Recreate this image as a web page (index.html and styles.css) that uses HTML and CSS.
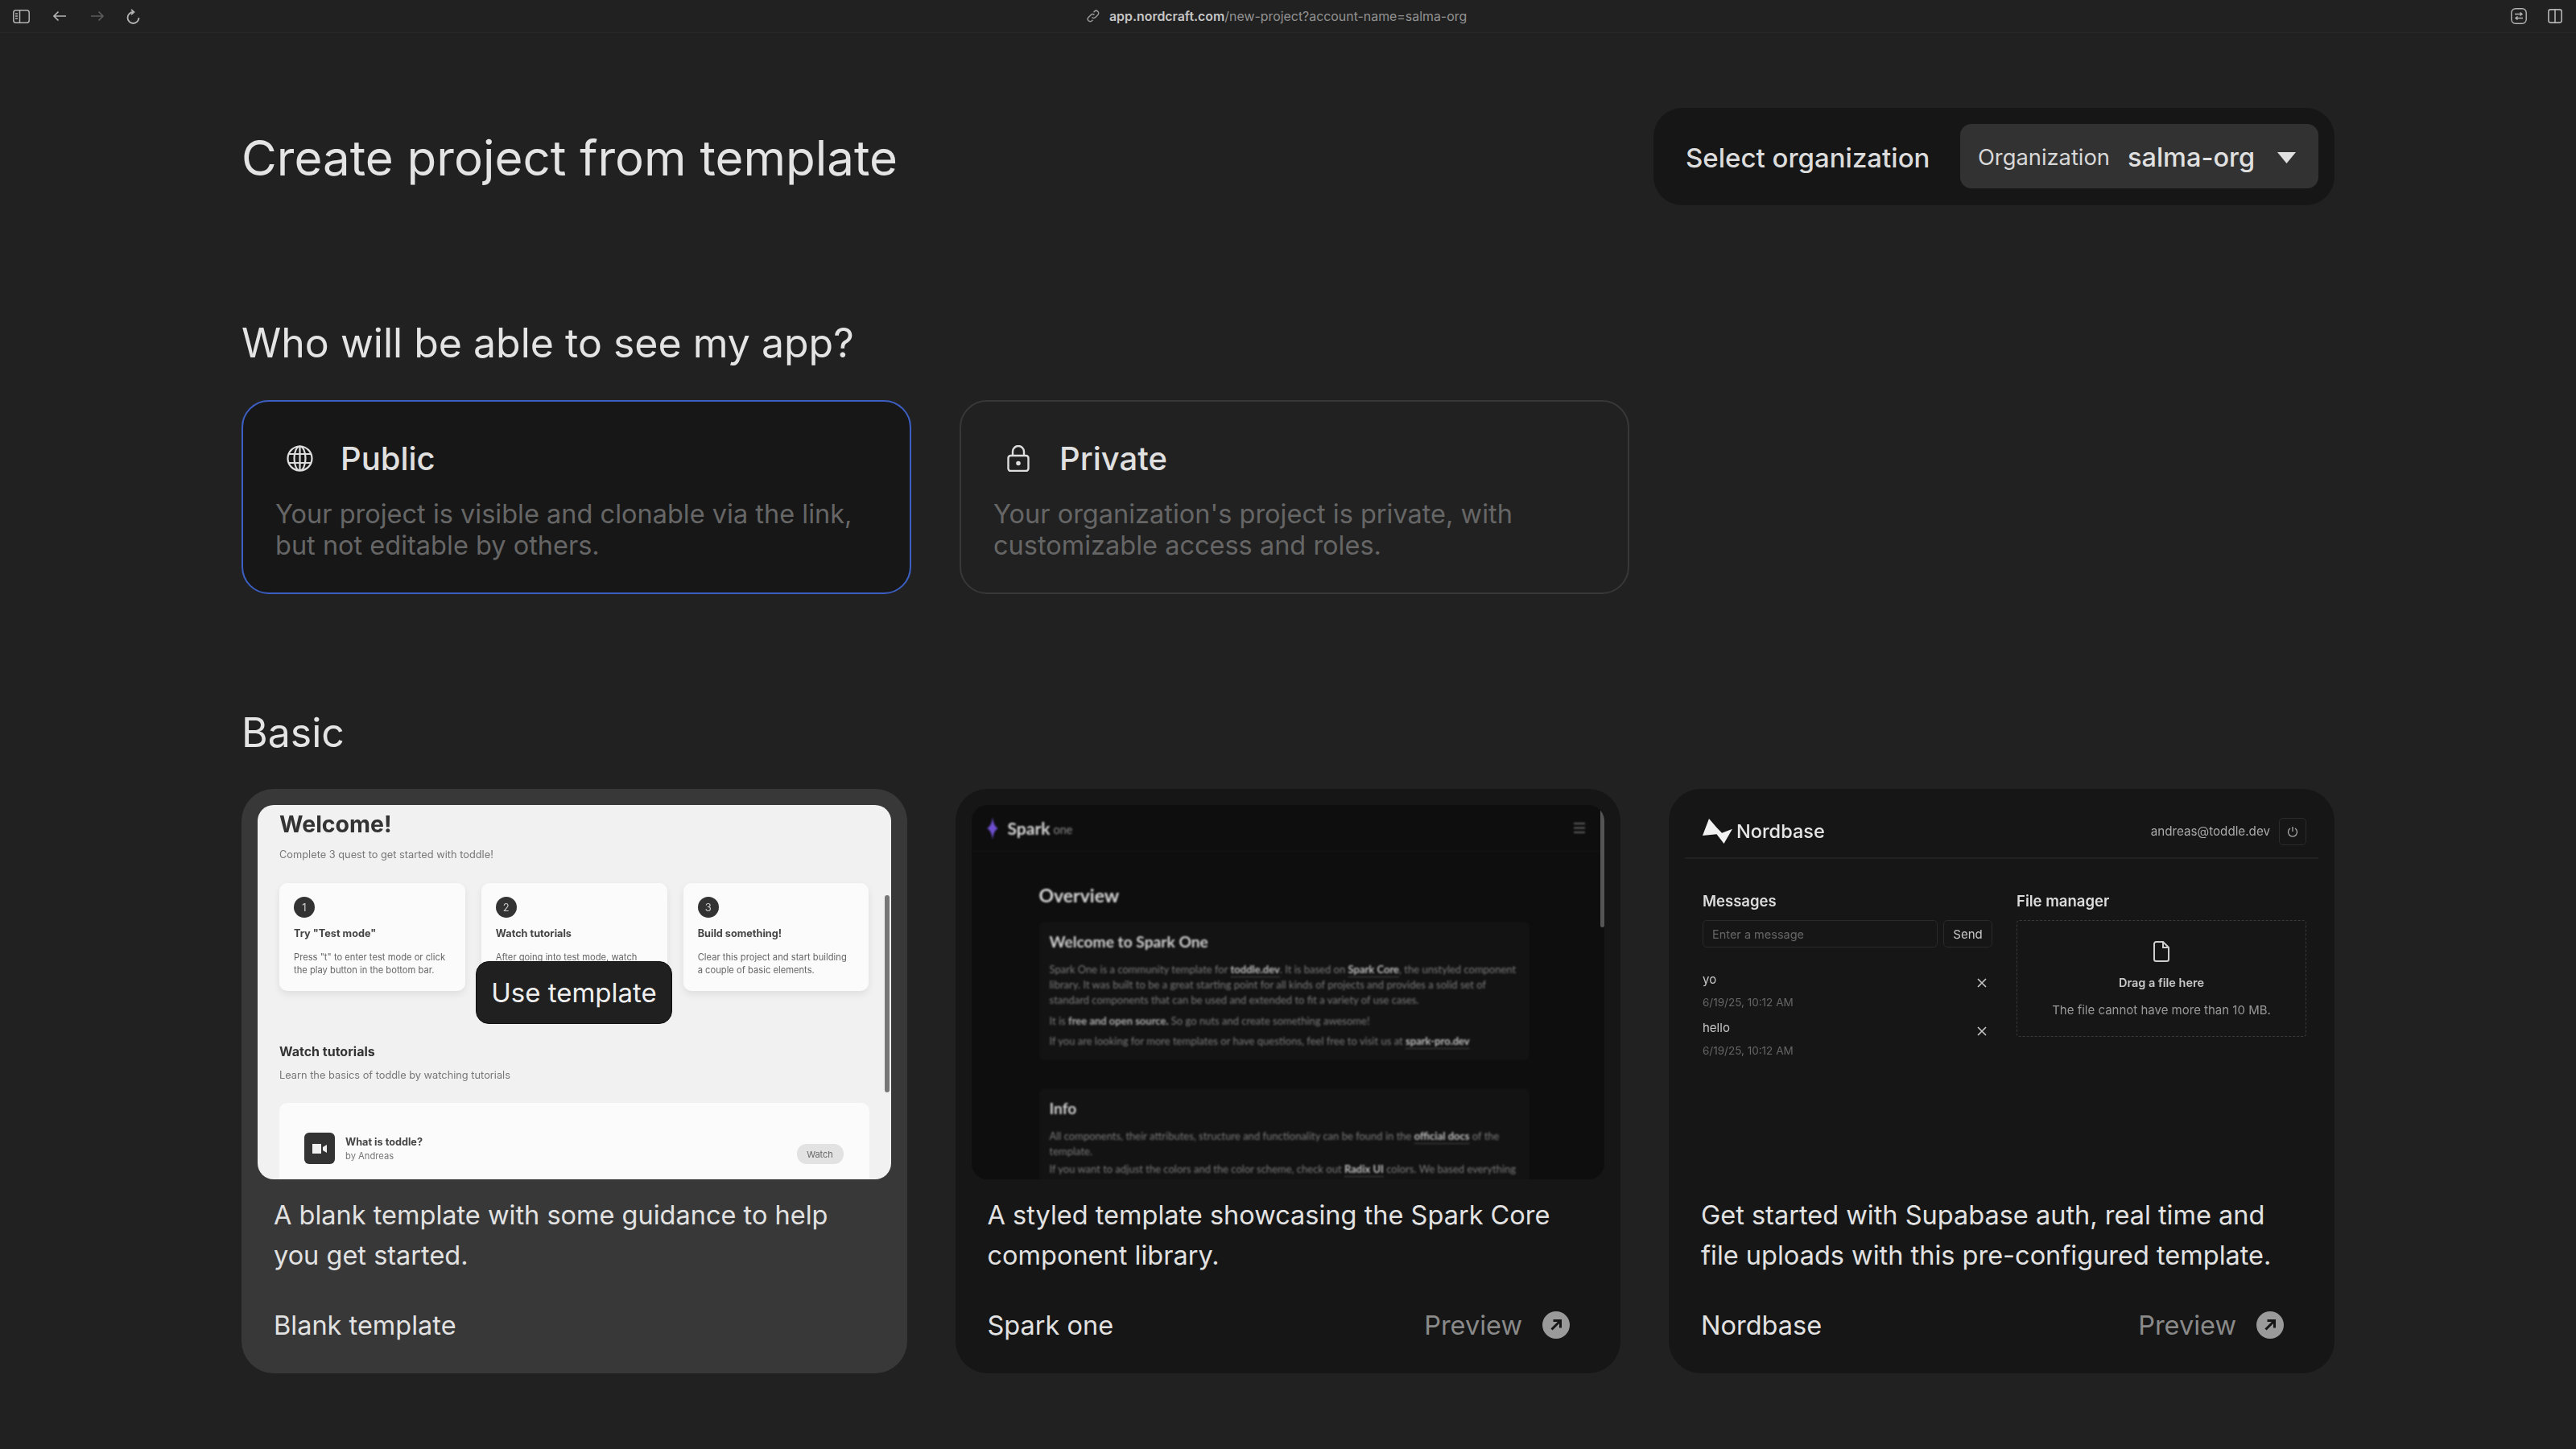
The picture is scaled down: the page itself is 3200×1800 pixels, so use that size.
FILE: index.html
```html
<!DOCTYPE html>
<html lang="en">
<head>
<meta charset="utf-8">
<title>Create project from template</title>
<link rel="stylesheet" href="styles.css">
</head>
<body>
<div class="page">
  <header class="toolbar">
    <div class="tb-left">
      <svg class="ic-side" viewBox="0 0 21 17" fill="none" stroke="currentColor" stroke-width="1.5"><rect x=".8" y=".8" width="19.4" height="15.4" rx="3"/><path d="M8.5 1v15"/><path d="M3 5h3M3 8h3M3 11h3"/></svg>
      <svg class="ic-arrow" viewBox="0 0 18 14" fill="none" stroke="currentColor" stroke-width="1.7"><path d="M17 7H2M7.500 1.500 2 7l5.500 5.500"/></svg>
      <svg class="ic-arrow dim" viewBox="0 0 18 14" fill="none" stroke="currentColor" stroke-width="1.7"><path d="M1 7h15M10.500 1.500 16 7l-5.500 5.500"/></svg>
      <svg class="ic-reload" viewBox="0 0 17 19" fill="none" stroke="currentColor" stroke-width="1.8"><path d="M8.500 4A7 7 0 1 0 15.500 11"/><path d="M6 .8 9.500 4 6 7.200"/></svg>
    </div>
    <div class="url">
      <svg class="ic-link" viewBox="0 0 16 16" fill="none" stroke="currentColor" stroke-width="1.5"><path d="M6.500 9.500a3 3 0 0 0 4.300 0l3-3a3 3 0 0 0-4.300-4.300l-1 1"/><path d="M9.500 6.500a3 3 0 0 0-4.300 0l-3 3a3 3 0 0 0 4.300 4.300l1-1"/></svg>
      <span class="url-text"><b class="url-host">app.nordcraft.com</b>/new-project?account-name=salma-org</span>
    </div>
    <div class="tb-right">
      <svg class="ic-ext" viewBox="0 0 20 20" fill="none" stroke="currentColor" stroke-width="1.4"><rect x=".8" y=".8" width="18.400" height="18.400" rx="5"/><path d="M5 7.500h9M11.500 5.500l2.500 2-2.500 2M15 12.500H6M8.500 10.500l-2.500 2 2.500 2"/></svg>
      <svg class="ic-split" viewBox="0 0 18 18" fill="none" stroke="currentColor" stroke-width="1.6"><rect x=".9" y=".9" width="16.200" height="16.200" rx="2.500"/><path d="M9 1v16"/></svg>
    </div>
  </header>

  <main class="main">
    <section class="top">
      <h1 class="title">Create project from template</h1>
      <div class="org">
        <span class="org-label">Select organization</span>
        <div class="select">
          <span class="select-key">Organization</span>
          <span class="select-val">salma-org</span>
          <svg class="caret" viewBox="0 0 23 14"><path d="M0 0h23L11.500 14z" fill="currentColor"/></svg>
        </div>
      </div>
    </section>

    <h2 class="heading who">Who will be able to see my app?</h2>
    <section class="options">
      <article class="option active">
        <div class="option-head">
          <svg class="ic-globe" viewBox="0 0 33 33" fill="none" stroke="currentColor" stroke-width="2.200"><circle cx="16.500" cy="16.500" r="15"/><ellipse cx="16.500" cy="16.500" rx="7" ry="15"/><path d="M3 11h27M3 22h27M16.500 1.500v30"/></svg>
          <span class="option-name">Public</span>
        </div>
        <p class="option-desc">Your project is visible and clonable via the link, but not editable by others.</p>
      </article>
      <article class="option">
        <div class="option-head">
          <svg class="ic-lock" viewBox="0 0 28 33" fill="none" stroke="currentColor" stroke-width="2.400"><rect x="1.500" y="13" width="25" height="19" rx="3"/><path d="M7 13V8a7 7 0 0 1 14 0v5"/><circle cx="14" cy="22.500" r="1.600" fill="currentColor"/></svg>
          <span class="option-name">Private</span>
        </div>
        <p class="option-desc">Your organization's project is private, with customizable access and roles.</p>
      </article>
    </section>

    <h2 class="heading basic">Basic</h2>
    <section class="cards">
      <article class="card hover">
        <div class="preview blank">
          <div class="blur blank-inner">
            <div class="bl-h1">Welcome!</div>
            <div class="bl-sub">Complete 3 quest to get started with toddle!</div>
            <div class="quests">
              <div class="quest"><span class="num">1</span><div class="q-title">Try "Test mode"</div><div class="q-desc">Press "t" to enter test mode or click the play button in the bottom bar.</div></div>
              <div class="quest"><span class="num">2</span><div class="q-title">Watch tutorials</div><div class="q-desc">After going into test mode, watch</div></div>
              <div class="quest"><span class="num">3</span><div class="q-title">Build something!</div><div class="q-desc">Clear this project and start building a couple of basic elements.</div></div>
            </div>
            <div class="bl-h2">Watch tutorials</div>
            <div class="bl-sub learn">Learn the basics of toddle by watching tutorials</div>
            <div class="tutorial">
              <span class="tut-icon"><svg class="ic-video" viewBox="0 0 18 14"><path d="M0 1h11v12H0zM13 5l5-3v10l-5-3z" fill="currentColor"/></svg></span>
              <div class="tut-text"><div class="tut-title">What is toddle?</div><div class="tut-by">by Andreas</div></div>
              <span class="watch">Watch</span>
            </div>
          </div>
          <span class="scroll-light"></span>
          <button class="use">Use template</button>
        </div>
        <div class="card-body">
          <p class="card-desc">A blank template with some guidance to help you get started.</p>
          <div class="card-foot"><span class="card-name">Blank template</span></div>
        </div>
      </article>

      <article class="card">
        <div class="preview spark">
          <div class="blur-strong">
            <div class="sp-bar">
              <div class="sp-brand">
                <svg class="ic-star" viewBox="0 0 14 28"><path d="M7 0c1 8 3 12 7 14-4 2-6 6-7 14-1-8-3-12-7-14 4-2 6-6 7-14z" fill="#6d4fd0"/></svg>
                <span class="sp-name">Spark</span><span class="sp-one">one</span>
              </div>
              <svg class="ic-menu" viewBox="0 0 14 13" fill="none" stroke="currentColor" stroke-width="1.500"><path d="M0 1h14M0 6.500h14M0 12h14"/></svg>
            </div>
            <div class="sp-content">
              <div class="sp-h1">Overview</div>
              <div class="sp-card first">
                <div class="sp-h2">Welcome to Spark One</div>
                <p class="sp-p">Spark One is a community template for <b class="sp-link">toddle.dev</b>. It is based on <b class="sp-link">Spark Core</b>, the unstyled component library. It was built to be a great starting point for all kinds of projects and provides a solid set of standard components that can be used and extended to fit a variety of use cases.</p>
                <p class="sp-p gap-a">It is <b class="sp-b">free and open source.</b> So go nuts and create something awesome!</p>
                <p class="sp-p gap-b">If you are looking for more templates or have questions, feel free to visit us at <b class="sp-link">spark-pro.dev</b></p>
              </div>
              <div class="sp-card second">
                <div class="sp-h2">Info</div>
                <p class="sp-p">All components, their attributes, structure and functionality can be found in the <b class="sp-link">official docs</b> of the template.</p>
                <p class="sp-p gap-c">If you want to adjust the colors and the color scheme, check out <b class="sp-link">Radix UI</b> colors. We based everything on</p>
              </div>
            </div>
          </div>
          <span class="scroll-dark"></span>
        </div>
        <div class="card-body">
          <p class="card-desc">A styled template showcasing the Spark Core component library.</p>
          <div class="card-foot">
            <span class="card-name">Spark one</span>
            <span class="preview-link">Preview
              <svg class="ic-go" viewBox="0 0 34 34"><circle cx="17" cy="17" r="17" fill="#9a9a9a"/><path d="M11.500 22.500 22 12M13.500 11.500H22.500V20.500" fill="none" stroke="#161616" stroke-width="3"/></svg>
            </span>
          </div>
        </div>
      </article>

      <article class="card">
        <div class="preview nord">
          <div class="blur">
            <div class="nb-bar">
              <div class="nb-brand">
                <svg class="ic-nord" viewBox="0 0 37 32"><path d="M0 21 8 0l9.500 11L24 17.700l13-5L26.500 31 17.500 19.300z" fill="#f2f2f2"/></svg>
                <span class="nb-name">Nordbase</span>
              </div>
              <div class="nb-user">
                <span class="nb-mail">andreas@toddle.dev</span>
                <span class="nb-power"><svg class="ic-power" viewBox="0 0 14 14" fill="none" stroke="currentColor" stroke-width="1.300"><path d="M4 3a5.500 5.500 0 1 0 6 0M7 1v6"/></svg></span>
              </div>
            </div>
            <div class="nb-grid">
              <div>
                <div class="nb-h">Messages</div>
                <div class="nb-form"><span class="nb-input">Enter a message</span><span class="nb-send">Send</span></div>
                <div class="nb-msg first"><div><div class="nb-text">yo</div><div class="nb-date">6/19/25, 10:12 AM</div></div><svg class="ic-x" viewBox="0 0 16 16" fill="none" stroke="currentColor" stroke-width="1.600"><path d="m3 3 10 10M13 3 3 13"/></svg></div>
                <div class="nb-msg"><div><div class="nb-text">hello</div><div class="nb-date">6/19/25, 10:12 AM</div></div><svg class="ic-x" viewBox="0 0 16 16" fill="none" stroke="currentColor" stroke-width="1.600"><path d="m3 3 10 10M13 3 3 13"/></svg></div>
              </div>
              <div>
                <div class="nb-h">File manager</div>
                <div class="drop">
                  <svg class="ic-file" viewBox="0 0 20 26" fill="none" stroke="currentColor" stroke-width="2"><path d="M3.500 1H12l7 7v14.500A2.500 2.500 0 0 1 16.500 25h-13A2.500 2.500 0 0 1 1 22.500v-19A2.500 2.500 0 0 1 3.500 1zM12 1v7h7"/></svg>
                  <div class="drop-title">Drag a file here</div>
                  <div class="drop-note">The file cannot have more than 10 MB.</div>
                </div>
              </div>
            </div>
          </div>
        </div>
        <div class="card-body">
          <p class="card-desc">Get started with Supabase auth, real time and file uploads with this pre-configured template.</p>
          <div class="card-foot">
            <span class="card-name">Nordbase</span>
            <span class="preview-link">Preview
              <svg class="ic-go" viewBox="0 0 34 34"><circle cx="17" cy="17" r="17" fill="#9a9a9a"/><path d="M11.500 22.500 22 12M13.500 11.500H22.500V20.500" fill="none" stroke="#161616" stroke-width="3"/></svg>
            </span>
          </div>
        </div>
      </article>
    </section>
  </main>
</div>
</body>
</html>
```

FILE: styles.css
```css
* { box-sizing: border-box; }
html, body { margin: 0; padding: 0; }
body { background: #212121; color: #e2e2e2; font-family: Inter, "Liberation Sans", sans-serif; }
.page { width: 3200px; height: 1800px; overflow: hidden; background: #212121; }
p { margin: 0; }

/* browser bar */
.toolbar { height: 41px; border-bottom: 1px solid #282828; display: flex; align-items: center; justify-content: space-between; position: relative; padding: 0 17px 0 16px; color: #b4b4b4; }
.tb-left { display: flex; align-items: center; }
.ic-side { width: 21px; height: 17px; margin-right: 28px; }
.ic-arrow { width: 18px; height: 14px; margin-right: 29px; }
.ic-arrow.dim { color: #5c5c5c; margin-right: 27px; }
.ic-reload { width: 17px; height: 19px; }
.url { position: absolute; left: 1350px; top: 0; height: 40px; display: flex; align-items: center; color: #999; }
.ic-link { width: 16px; height: 16px; margin-right: 12px; }
.url-text { font-size: 15.900px; white-space: nowrap; color: #929292; }
.url-host { font-weight: 600; color: #c6c6c6; }
.tb-right { display: flex; align-items: center; }
.ic-ext { width: 20px; height: 20px; margin-right: 26px; }
.ic-split { width: 18px; height: 18px; }

/* layout */
.main { padding: 0 300px; }
.top { margin-top: 92px; height: 122px; display: flex; align-items: center; justify-content: space-between; }
.title { margin: 0; padding-top: 3px; font-size: 60px; line-height: 80px; font-weight: 400; color: #e4e4e4; }
.org { width: 846px; height: 121px; background: #161616; border-radius: 36px; display: flex; align-items: center; justify-content: space-between; padding: 0 20px 0 40px; }
.org-label { padding-top: 3px; font-size: 33px; font-weight: 500; color: #dcdcdc; }
.select { width: 445px; height: 80px; background: #323232; border-radius: 14px; display: flex; align-items: center; padding: 3px 28px 0 22px; }
.select-key { font-size: 27.300px; color: #d8d8d8; }
.select-val { font-size: 32.500px; font-weight: 500; color: #e0e0e0; margin-left: 22px; }
.caret { width: 23px; height: 14px; margin-left: auto; color: #e0e0e0; }

.heading { margin: 0; font-size: 50px; line-height: 60px; font-weight: 400; color: #e4e4e4; }
.who { margin-top: 141px; padding-bottom: 1px; }
.options { margin-top: 40px; display: flex; gap: 60px; }
.option { width: 832px; height: 241px; border: 2px solid #383838; border-radius: 34px; padding: 51px 40px 0 40px; }
.option.active { background: #171717; border-color: #3c5fc4; }
.option-head { display: flex; align-items: center; height: 38px; padding-left: 14px; color: #dedede; }
.ic-globe { width: 33px; height: 33px; margin-right: 34px; }
.ic-lock { width: 28px; height: 33px; margin: 0 37px 0 3px; }
.option-name { font-size: 40px; font-weight: 500; color: #e0e0e0; }
.option-desc { margin-top: 31px; font-size: 32.500px; line-height: 39px; color: #666; }
.basic { margin-top: 142px; }

/* cards */
.cards { margin-top: 40px; display: grid; grid-template-columns: repeat(3, 1fr); gap: 60px; }
.card { height: 726px; background: #161616; border-radius: 40px; padding: 20px; }
.card.hover { background: #383838; }
.preview { position: relative; height: 465px; border-radius: 20px; overflow: hidden; }
.blur { filter: blur(.6px); }
.blur-strong { filter: blur(.8px); }
.card-body { padding: 0 20px; }
.card-desc { margin-top: 20px; font-size: 32.500px; line-height: 50px; color: #e2e2e2; }
.card-foot { margin-top: 36px; height: 50px; display: flex; align-items: center; justify-content: space-between; }
.card-name { font-size: 32.500px; color: #e2e2e2; }
.preview-link { display: flex; align-items: center; font-size: 32.500px; color: #8a8a8a; margin-right: 23px; }
.ic-go { width: 34px; height: 34px; margin-left: 25px; }

/* blank preview */
.blank { background: #f1f1f1; color: #333; }
.blank-inner { padding: 4px 27px 0; }
.bl-h1 { font-size: 28.500px; line-height: 40px; font-weight: 700; color: #333; }
.bl-sub { margin-top: 8px; font-size: 12.800px; line-height: 20px; color: #777; white-space: nowrap; }
.quests { margin-top: 25px; display: grid; grid-template-columns: repeat(3, 1fr); gap: 20px; }
.quest { height: 134px; background: #fbfbfb; border-radius: 10px; box-shadow: 0 4px 10px rgba(0,0,0,.08); padding: 17px 24px 0 18px; overflow: hidden; }
.num { display: flex; align-items: center; justify-content: center; width: 26px; height: 26px; border-radius: 50%; background: #333; color: #ccc; font-size: 13px; }
.q-title { margin-top: 10px; font-size: 12.700px; line-height: 20px; font-weight: 700; color: #444; }
.q-desc { margin-top: 11px; font-size: 11.200px; line-height: 16px; color: #666; }
.bl-h2 { margin-top: 63px; font-size: 16px; line-height: 24px; font-weight: 700; color: #333; }
.learn { margin-top: 8px; }
.tutorial { margin-top: 24px; height: 150px; background: #fbfbfb; border-radius: 10px; padding: 37px 32px 0 31px; display: flex; align-items: flex-start; }
.tut-icon { width: 38px; height: 39px; border-radius: 6px; background: #333; display: flex; align-items: center; justify-content: center; color: #f0f0f0; }
.ic-video { width: 18px; height: 14px; }
.tut-text { margin-left: 13px; margin-top: 3px; }
.tut-title { font-size: 12.700px; line-height: 18px; font-weight: 700; color: #444; }
.tut-by { font-size: 11.200px; line-height: 16px; color: #777; }
.watch { margin-left: auto; margin-top: 14px; width: 58px; height: 25px; border-radius: 12px; background: #e2e2e2; color: #666; font-size: 11px; display: flex; align-items: center; justify-content: center; }
.scroll-light { position: absolute; left: 779px; top: 112px; width: 6px; height: 245px; border-radius: 3px; background: #777; }
.use { position: absolute; left: 271px; top: 194px; width: 244px; height: 78px; border: 1px solid #111; border-radius: 16px; background: #202020; color: #efefef; font: 400 33px Inter, sans-serif; padding: 0; }

/* spark preview */
.spark { background: #0e0e0e; font-family: Lato, "Noto Sans", sans-serif; }
.sp-bar { height: 58px; border-bottom: 1px solid #171717; display: flex; align-items: center; justify-content: space-between; padding: 0 24px 0 19px; }
.sp-brand { display: flex; align-items: center; }
.ic-star { width: 14px; height: 28px; margin-right: 12px; }
.sp-name { font-size: 21px; font-weight: 700; color: #d8d8d8; }
.sp-one { font-size: 14.500px; color: #888; margin-left: 4px; margin-top: 4px; }
.ic-menu { width: 14px; height: 13px; color: #777; }
.sp-content { padding: 0 93px 0 84px; }
.sp-h1 { margin-top: 39px; font-size: 23px; line-height: 30px; font-weight: 700; color: #d6d6d6; }
.sp-card { background: #131313; border-radius: 6px; padding: 13px 13px 14px; }
.sp-card.first { margin-top: 18px; }
.sp-card.second { margin-top: 35px; }
.sp-h2 { font-size: 19.200px; line-height: 24px; font-weight: 700; color: #cfcfcf; margin-bottom: 13px; }
.sp-p { font-size: 13px; line-height: 19px; color: #7a7a7a; }
.sp-link { font-weight: 700; color: #bdbdbd; text-decoration: underline; text-decoration-color: #444; text-underline-offset: 4px; }
.sp-b { font-weight: 700; color: #aaa; }
.gap-a { margin-top: 7px; }
.gap-b { margin-top: 6px; }
.gap-c { margin-top: 3px; }
.scroll-dark { position: absolute; right: 0; top: 2px; width: 5px; height: 150px; border-radius: 3px; background: #555; }

/* nordbase preview */
.nord { background: #161616; }
.nb-bar { height: 67px; margin: 0; border-bottom: 2px solid #222; display: flex; align-items: center; justify-content: space-between; padding: 0 15px 0 22px; }
.nb-brand { display: flex; align-items: center; }
.ic-nord { width: 37px; height: 32px; margin-right: 5px; }
.nb-name { font-size: 23.500px; font-weight: 500; color: #e6e6e6; }
.nb-user { display: flex; align-items: center; }
.nb-mail { font-size: 15.200px; color: #aaa; }
.nb-power { width: 34px; height: 34px; margin-left: 11px; border: 1px solid #2c2c2c; border-radius: 5px; display: flex; align-items: center; justify-content: center; color: #aaa; }
.ic-power { width: 14px; height: 14px; }
.nb-grid { padding: 40px 15px 0 22px; display: grid; grid-template-columns: 360px 360px; gap: 30px; }
.nb-h { font-size: 18.500px; line-height: 24px; font-weight: 600; color: #dcdcdc; }
.nb-form { margin-top: 12px; display: flex; gap: 7px; height: 34px; }
.nb-input { width: 292px; border: 1px solid #2a2a2a; border-radius: 5px; padding-left: 11px; font-size: 14.500px; color: #666; display: flex; align-items: center; }
.nb-send { width: 61px; border: 1px solid #2a2a2a; border-radius: 5px; font-size: 15px; color: #c8c8c8; display: flex; align-items: center; justify-content: center; }
.nb-msg { display: flex; justify-content: space-between; align-items: flex-start; margin-top: 12px; }
.nb-msg.first { margin-top: 30px; }
.nb-text { font-size: 15px; line-height: 20px; color: #c8c8c8; }
.nb-date { margin-top: 8px; font-size: 13.500px; line-height: 20px; color: #666; }
.ic-x { width: 16px; height: 16px; margin: 6px 5px 0 0; color: #c8c8c8; }
.drop { margin-top: 12px; height: 145px; border: 1px dashed #3a3a3a; border-radius: 4px; display: flex; flex-direction: column; align-items: center; padding-top: 25px; }
.ic-file { width: 20px; height: 26px; color: #cfcfcf; }
.drop-title { margin-top: 16px; font-size: 14.500px; line-height: 20px; font-weight: 600; color: #c8c8c8; }
.drop-note { margin-top: 14px; font-size: 15px; line-height: 20px; color: #999; }
```
